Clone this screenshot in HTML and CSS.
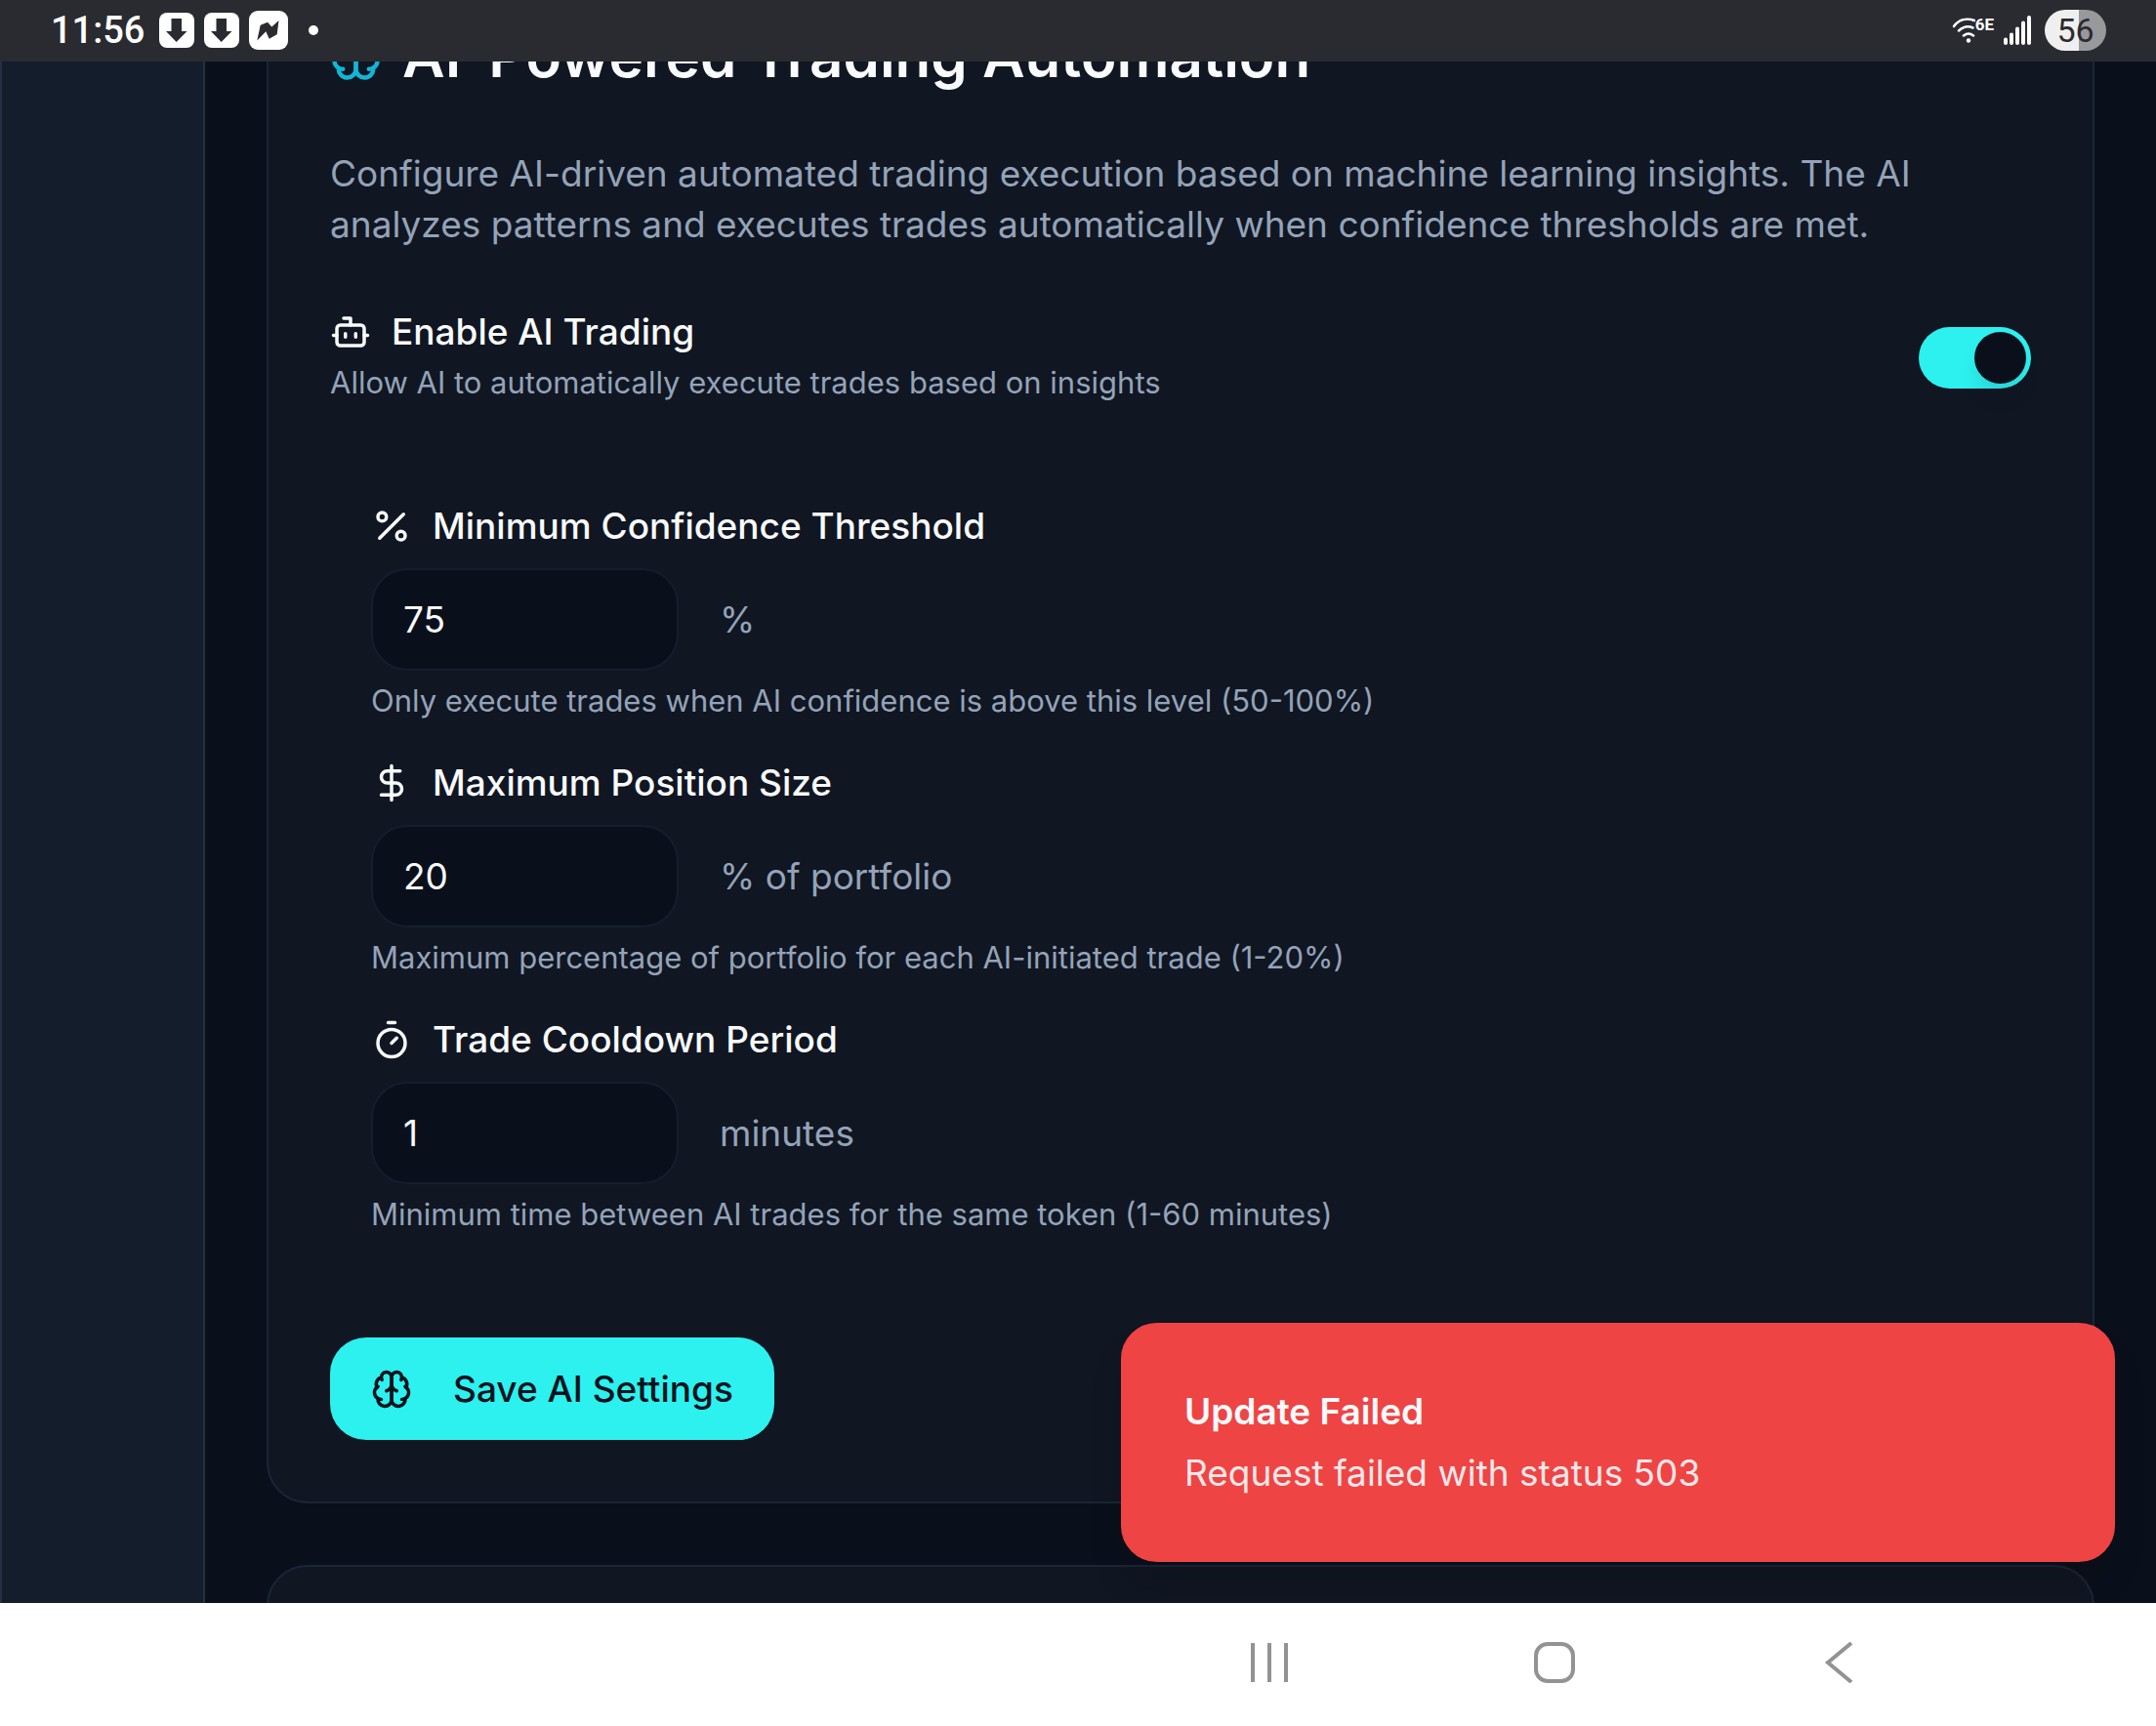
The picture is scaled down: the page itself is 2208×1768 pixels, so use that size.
FILE: index.html
```html
<!DOCTYPE html>
<html lang="en">
<head>
<meta charset="utf-8">
<meta name="viewport" content="width=device-width, initial-scale=1">
<title>AI-Powered Trading Automation</title>
<link rel="stylesheet" href="styles.css">
</head>
<body>
<svg class="sprite" aria-hidden="true">
  <symbol id="brain" viewBox="0 0 24 24">
    <path d="M12 5a3 3 0 1 0-5.997.125 4 4 0 0 0-2.526 5.77 4 4 0 0 0 .556 6.588A4 4 0 1 0 12 18Z"/>
    <path d="M12 5a3 3 0 1 1 5.997.125 4 4 0 0 1 2.526 5.77 4 4 0 0 1-.556 6.588A4 4 0 1 1 12 18Z"/>
    <path d="M15 13a4.5 4.5 0 0 1-3-4 4.5 4.5 0 0 1-3 4"/>
    <path d="M17.599 6.5a3 3 0 0 0 .399-1.375M6.003 5.125A3 3 0 0 0 6.401 6.5M3.477 10.896a4 4 0 0 1 .585-.396M19.938 10.5a4 4 0 0 1 .585.396M6 18a4 4 0 0 1-1.967-.516M19.967 17.484A4 4 0 0 1 18 18"/>
  </symbol>
  <symbol id="download" viewBox="0 0 36 36">
    <rect width="36" height="36" rx="8" fill="#fff"/>
    <path d="M12.500 6h10.500v13h5.500L17.700 30 7 19h5.500z" fill="#2a2b30"/>
  </symbol>
</svg>

<div class="screen">
  <header class="status">
    <div class="status-group">
      <time class="clock">11:56</time>
      <div class="notices">
        <svg class="notice" aria-hidden="true"><use href="#download"/></svg>
        <svg class="notice" aria-hidden="true"><use href="#download"/></svg>
        <svg class="notice-large" viewBox="0 0 40 40" aria-hidden="true"><rect width="40" height="40" rx="9" fill="#fff"/><path d="M8.300 30.500 11.700 14.700 19 11.700 23.300 16.500 30.500 10 28.700 24.300 20.700 28.700 17.300 21.300z" fill="#2a2b30"/></svg>
        <span class="more"></span>
      </div>
    </div>
    <div class="status-group status-right">
      <div class="wifi">
        <svg class="wifi-icon" viewBox="0 0 24 28" aria-hidden="true"><path d="M2 10C7 3 15 1 23 4M7 14.500Q14 8 21.500 11.500M12 19.500Q17 15.500 22 19.500" fill="none" stroke="#fff" stroke-width="2.500" stroke-linecap="round"/><circle cx="17" cy="24.500" r="2.200" fill="#fff"/></svg>
        <span class="wifi-band">6E</span>
      </div>
      <svg class="signal" viewBox="0 0 28 30" aria-hidden="true"><path d="M2 24.500v3.500M8 19.500v8.500M14 13.500v14.500M20 7.500v20.500M26 2v26" stroke="#fff" stroke-width="4" stroke-linecap="round"/></svg>
      <span class="battery">56</span>
    </div>
  </header>

  <div class="app">
    <aside class="sidebar"></aside>
    <main class="content">
      <section class="card">
        <h2 class="card-title">
          <svg class="icon icon-title" aria-hidden="true"><use href="#brain"/></svg>
          AI-Powered Trading Automation
        </h2>
        <p class="intro">Configure AI-driven automated trading execution based on machine learning insights. The AI analyzes patterns and executes trades automatically when confidence thresholds are met.</p>

        <div class="toggle-row">
          <div class="toggle-text">
            <label class="label" for="enable">
              <svg class="icon" viewBox="0 0 24 24" aria-hidden="true"><path d="M12 8V4H8"/><rect width="16" height="12" x="4" y="8" rx="2"/><path d="M2 14h2M20 14h2M15 13v2M9 13v2"/></svg>
              Enable AI Trading
            </label>
            <p class="hint">Allow AI to automatically execute trades based on insights</p>
          </div>
          <input class="switch" type="checkbox" role="switch" id="enable" checked>
        </div>

        <div class="fields">
          <div class="field">
            <label class="label" for="confidence">
              <svg class="icon" viewBox="0 0 24 24" aria-hidden="true"><path d="M19 5 5 19"/><circle cx="6.500" cy="6.500" r="2.500"/><circle cx="17.500" cy="17.500" r="2.500"/></svg>
              Minimum Confidence Threshold
            </label>
            <div class="control"><input class="input" id="confidence" type="text" inputmode="numeric" value="75"><span>%</span></div>
            <p class="hint">Only execute trades when AI confidence is above this level (50-100%)</p>
          </div>
          <div class="field">
            <label class="label" for="position">
              <svg class="icon" viewBox="0 0 24 24" aria-hidden="true"><path d="M12 2v20M17 5H9.500a3.500 3.500 0 0 0 0 7h5a3.500 3.500 0 0 1 0 7H6"/></svg>
              Maximum Position Size
            </label>
            <div class="control"><input class="input" id="position" type="text" inputmode="numeric" value="20"><span>% of portfolio</span></div>
            <p class="hint">Maximum percentage of portfolio for each AI-initiated trade (1-20%)</p>
          </div>
          <div class="field">
            <label class="label" for="cooldown">
              <svg class="icon" viewBox="0 0 24 24" aria-hidden="true"><path d="M10 2h4M12 14l3-3"/><circle cx="12" cy="14" r="8"/></svg>
              Trade Cooldown Period
            </label>
            <div class="control"><input class="input" id="cooldown" type="text" inputmode="numeric" value="1"><span>minutes</span></div>
            <p class="hint">Minimum time between AI trades for the same token (1-60 minutes)</p>
          </div>
        </div>

        <button class="save" type="button">
          <svg class="icon" aria-hidden="true"><use href="#brain"/></svg>
          Save AI Settings
        </button>
      </section>
      <section class="card card-next"></section>
    </main>

    <div class="toast" role="alert">
      <strong class="toast-title">Update Failed</strong>
      <p class="toast-text">Request failed with status 503</p>
    </div>
  </div>

  <nav class="navbar" aria-label="System">
    <button class="nav-button" type="button" aria-label="Recent apps"><svg class="nav-icon" viewBox="0 0 42 42"><path d="M4 1v40M21 1v40M38 1v40"/></svg></button>
    <button class="nav-button" type="button" aria-label="Home"><svg class="nav-icon" viewBox="0 0 42 42"><rect x="2" y="2" width="38" height="38" rx="12"/></svg></button>
    <button class="nav-button" type="button" aria-label="Back"><svg class="nav-icon" viewBox="0 0 42 42"><path d="M33 1 9 21l24 20"/></svg></button>
  </nav>
</div>
</body>
</html>
```
FILE: styles.css
```css
:root {
  --bg: #0a101b;
  --card: #101622;
  --line: #1b2537;
  --text: #f8fafc;
  --muted: #94a3b8;
  --cyan: #2cf1ef;
  --red: #ef4444;
}

* { box-sizing: border-box; margin: 0; }

body {
  background: var(--bg);
  color: var(--text);
  font-family: Inter, "Liberation Sans", sans-serif;
  font-size: 37px;
  line-height: 52px;
}

button, input { font: inherit; color: inherit; }

.sprite { position: absolute; width: 0; height: 0; }

.screen { display: flex; flex-direction: column; height: 100vh; }

/* Status bar */
.status {
  display: flex;
  justify-content: space-between;
  align-items: center;
  flex: none;
  height: 63px;
  padding: 0 51px 2px 52px;
  background: #2a2b30;
  color: #fff;
  font-family: Roboto, sans-serif;
}
.status-group { display: flex; align-items: center; gap: 15px; }
.status-right { gap: 14px; }
.clock { font-size: 38px; font-weight: 500; line-height: 48px; }
.notices { display: flex; align-items: center; gap: 10px; }
.notice { width: 36px; height: 36px; }
.notice-large { width: 40px; height: 40px; }
.more { width: 10px; height: 10px; margin-left: 11px; border-radius: 50%; background: #fff; }
.wifi { display: flex; align-items: flex-start; margin-right: -4px; }
.wifi-icon { width: 24px; height: 28px; }
.wifi-band { font-size: 17px; font-weight: 700; line-height: 16px; }
.signal { width: 28px; height: 30px; }
.battery {
  width: 63px;
  height: 42px;
  border-radius: 21px;
  background: linear-gradient(90deg, #efefef 56%, #98999b 56%);
  color: #2a2b30;
  font-size: 34px;
  line-height: 42px;
  text-align: center;
}

/* App */
.app { position: relative; display: flex; flex: 1; min-height: 0; overflow: hidden; }
.sidebar {
  flex: none;
  width: 210px;
  background: #141d2c;
  border: solid #253042;
  border-width: 0 2px;
}
.content {
  display: flex;
  flex-direction: column;
  flex: 1;
  gap: 63px;
  min-width: 0;
  margin-top: -102px;
  padding: 0 63px;
}
.card {
  flex: none;
  padding: 63px;
  border: 2px solid var(--line);
  border-radius: 42px;
  background: var(--card);
}
.card-next { height: 420px; }

.card-title {
  display: flex;
  align-items: center;
  gap: 21px;
  margin-bottom: 63px;
  font-size: 60px;
  font-weight: 600;
  line-height: 63px;
}
.intro { margin-bottom: 63px; color: var(--muted); }

.icon {
  flex: none;
  width: 42px;
  height: 42px;
  fill: none;
  stroke: currentColor;
  stroke-width: 2;
  stroke-linecap: round;
  stroke-linejoin: round;
}
.icon-title { width: 53px; height: 53px; color: #12b5d5; }

.label { display: flex; align-items: center; gap: 21px; font-weight: 500; line-height: 42px; }
.hint { margin-top: 10px; color: var(--muted); font-size: 31px; line-height: 42px; }

.toggle-row { display: flex; justify-content: space-between; align-items: center; margin-bottom: 63px; }
.switch {
  appearance: none;
  display: flex;
  align-items: center;
  justify-content: flex-end;
  flex: none;
  width: 115px;
  height: 63px;
  margin: 0;
  padding: 0 5px;
  border-radius: 32px;
  background: var(--cyan);
}
.switch::before {
  content: "";
  width: 53px;
  height: 53px;
  border-radius: 50%;
  background: var(--bg);
  box-shadow: 0 16px 24px -8px rgba(16, 22, 34, 0.2);
}
.switch:not(:checked) { justify-content: flex-start; background: var(--line); }

.fields { display: flex; flex-direction: column; gap: 42px; padding: 42px; margin-bottom: 63px; }
.control { display: flex; align-items: center; gap: 42px; margin-top: 22px; color: var(--muted); }
.input {
  width: 315px;
  height: 105px;
  padding: 0 31px;
  border: 2px solid #151d2e;
  border-radius: 37px;
  background: var(--bg);
  color: var(--text);
}

.save {
  display: flex;
  align-items: center;
  gap: 42px;
  height: 105px;
  padding: 0 42px;
  border: 0;
  border-radius: 37px;
  background: var(--cyan);
  color: #04121c;
  font-weight: 500;
}

.toast {
  position: absolute;
  right: 42px;
  bottom: 42px;
  width: 1018px;
  max-width: calc(100% - 84px);
  padding: 63px;
  border: 2px solid var(--red);
  border-radius: 37px;
  background: var(--red);
  box-shadow: 0 26px 40px -8px rgba(0, 0, 0, 0.15);
}
.toast-title { display: block; font-weight: 600; }
.toast-text { margin-top: 11px; opacity: 0.9; }

/* System navigation */
.navbar {
  display: flex;
  justify-content: flex-end;
  flex: none;
  height: 126px;
  padding: 0 178px 4px 0;
  background: #fff;
}
.nav-button {
  display: flex;
  align-items: center;
  justify-content: center;
  width: 292px;
  border: 0;
  background: none;
}
.nav-icon { width: 42px; height: 42px; fill: none; stroke: #939393; stroke-width: 4; }
```
